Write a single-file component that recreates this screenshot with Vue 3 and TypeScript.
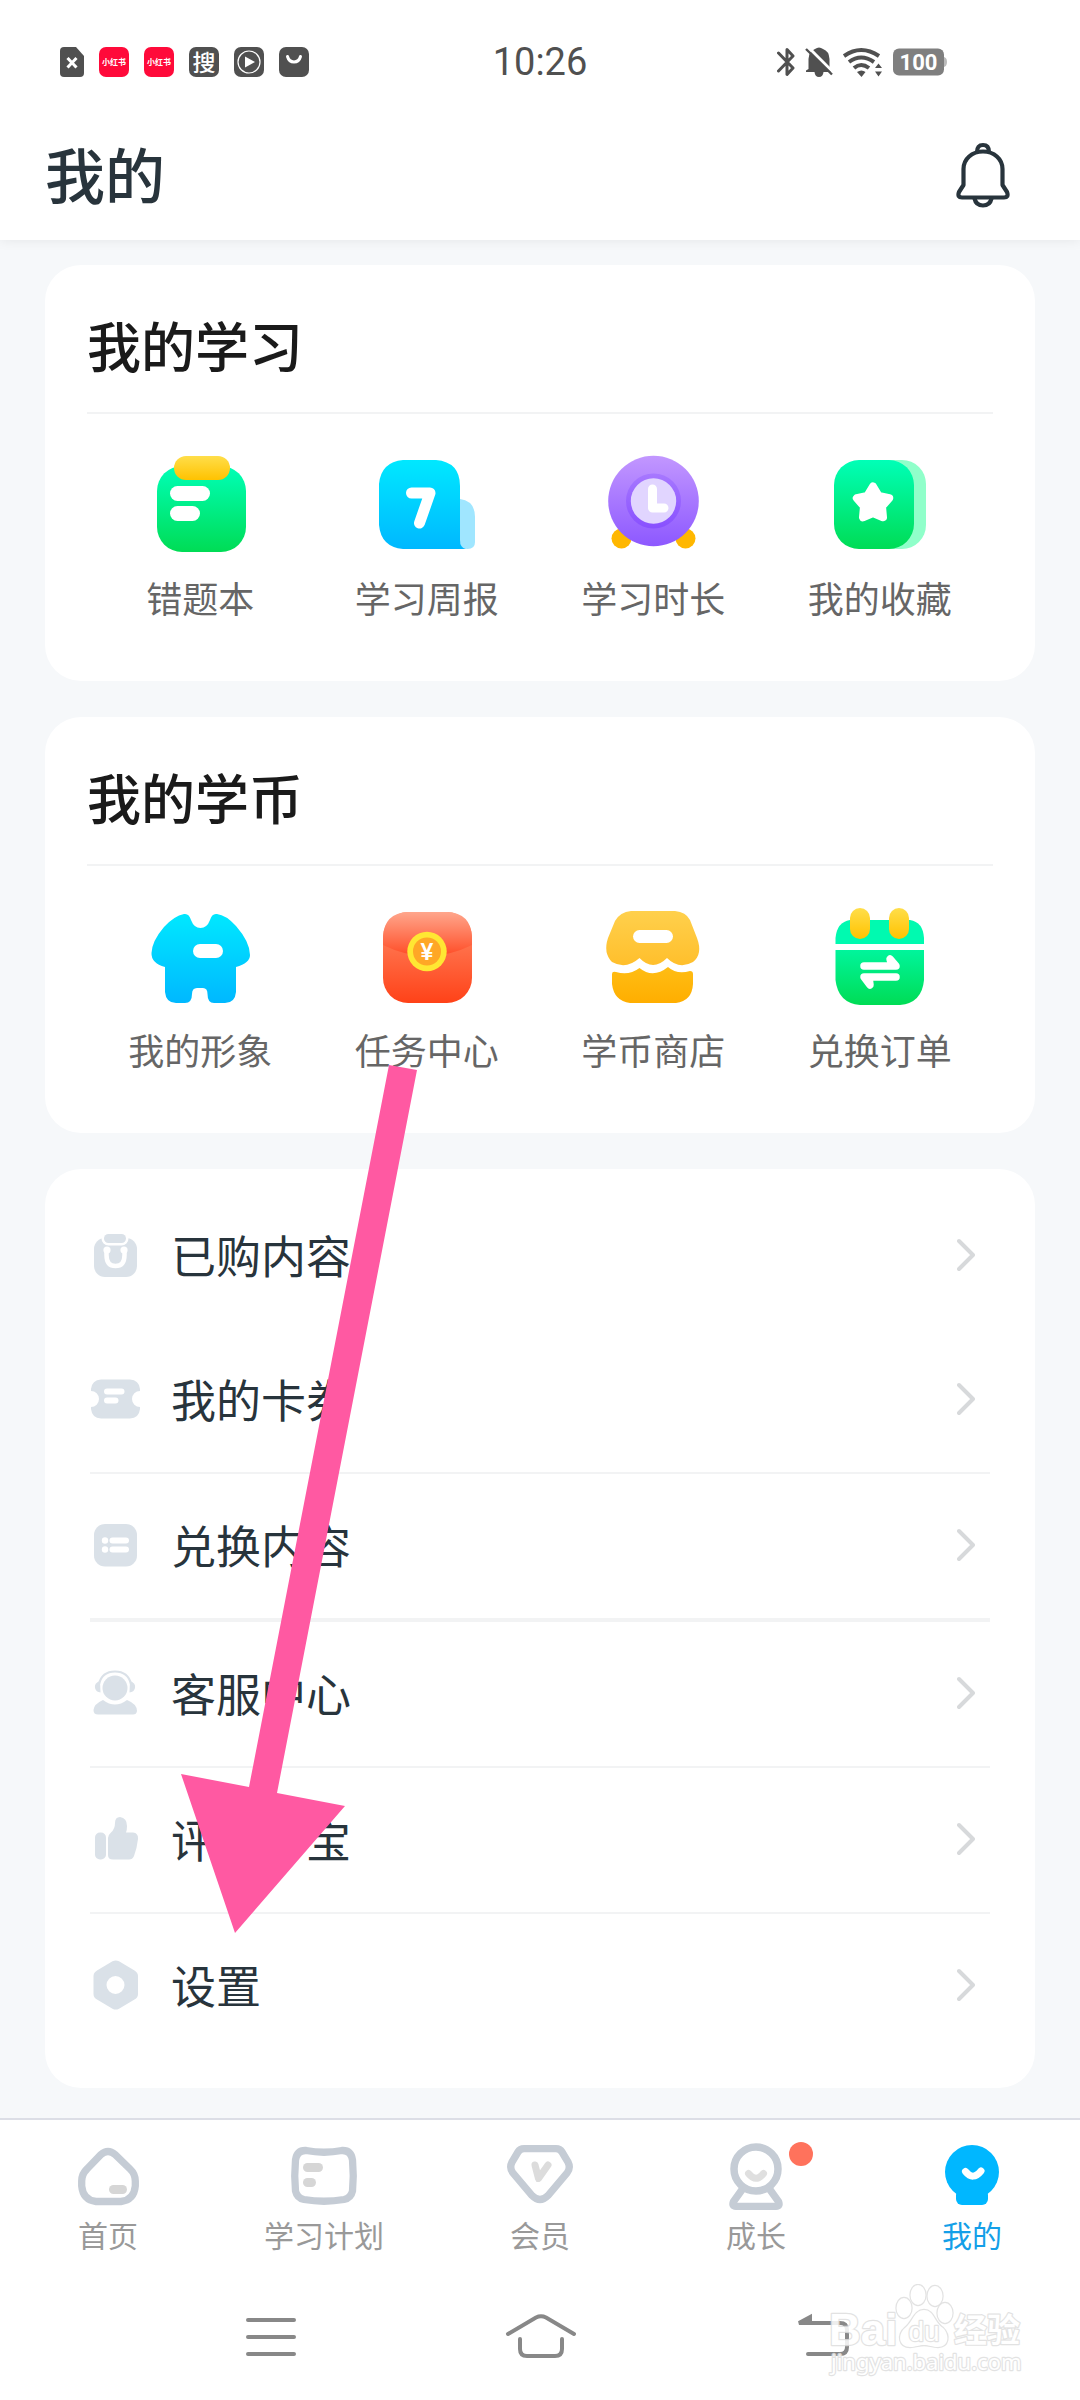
<script setup lang="ts">
interface Entry {
  label: string
  art: string
}
interface Section {
  title: string
  entries: Entry[]
}
interface Row extends Entry {
  divider: 'none' | 'thin' | 'thick'
}
interface Tab extends Entry {
  active?: boolean
  dot?: boolean
}

const sections: Section[] = [
  {
    title: '我的学习',
    entries: [
      {
        label: '错题本',
        art: `<rect x="11" y="16" width="89" height="86" rx="25" fill="url(#g-green)"/>
          <rect x="28" y="6" width="56" height="24" rx="12" fill="url(#g-yellow)"/>
          <rect x="24" y="36" width="40" height="15" rx="7.5" fill="#fff"/>
          <rect x="24" y="56" width="30" height="15" rx="7.5" fill="#fff"/>`,
      },
      {
        label: '学习周报',
        art: `<path d="M87 49Q102 51 102 67V92Q102 99 94.500 99Q87 99 87 92Z" fill="#a0e6ff"/>
          <path d="M30 10H63Q87 12 87 36V90Q87 98 93 99H30Q8 97 6 75V34Q8 12 30 10Z" fill="url(#g-cyan)"/>
          <path d="M38.500 43H57L46.500 73" fill="none" stroke="#fff" stroke-width="11" stroke-linecap="round" stroke-linejoin="round"/>`,
      },
      {
        label: '学习时长',
        art: `<circle cx="22.500" cy="88.500" r="10" fill="#ffb700"/><circle cx="86.500" cy="88.500" r="10" fill="#ffb700"/>
          <circle cx="54.500" cy="51" r="45.300" fill="url(#g-purple)"/>
          <circle cx="54.500" cy="51" r="27.500" fill="url(#g-ring)"/>
          <circle cx="54.500" cy="51" r="22.700" fill="#e1d5ff"/>
          <path d="M53.500 39V58H65" fill="none" stroke="#fff" stroke-width="9" stroke-linecap="round" stroke-linejoin="round"/>`,
      },
      {
        label: '我的收藏',
        art: `<rect x="22" y="10" width="78" height="89" rx="24" fill="#90ffca"/>
          <rect x="8" y="10" width="80" height="89" rx="25" fill="url(#g-green)"/>
          <path d="M47 36.500L52.600 45.800L63.200 48.200L56 56.400L57 67.300L47 63L37 67.300L38 56.400L30.800 48.200L41.400 45.800Z" fill="#fff" stroke="#fff" stroke-width="8" stroke-linejoin="round"/>`,
      },
    ],
  },
  {
    title: '我的学币',
    entries: [
      {
        label: '我的形象',
        art: `<path d="M38 12Q43 11 45 18Q48 26 54.500 26Q61 26 64 18Q66 11 71 12Q80 13 90 24Q104 40 104 53Q104 61 90 65V90Q89 101 79 101H68Q61.500 101 61.500 92Q61.500 86 57 86H51Q46 86 46 92Q46 101 39 101H30Q20 101 19 90V65Q5 61 5.500 51Q6 39 18 25Q28 14 38 12Z" fill="url(#g-cyan)"/>
          <rect x="47" y="42" width="30" height="14" rx="7" fill="#fff"/>`,
      },
      {
        label: '任务中心',
        art: `<rect x="10" y="10" width="89" height="91" rx="25" fill="url(#g-red)"/>
          <path d="M10 43V35Q11 11 35 10H74Q98 11 99 35V43Q54.500 65 10 43Z" fill="url(#g-flap)"/>
          <circle cx="54" cy="49.500" r="19.700" fill="#ffe733"/><circle cx="54" cy="49.500" r="14" fill="#ffa726"/>
          <text x="54" y="57.500" text-anchor="middle" font-family="Liberation Sans, sans-serif" font-weight="700" font-size="23" fill="#fff">¥</text>`,
      },
      {
        label: '学币商店',
        art: `<path d="M32 9H76Q87 10 91 18L98 36Q104 52 94 60Q80 68 68 56Q54 70 40.500 56Q27 68 13 60Q4 51 9 36L16 19Q21 10 32 9Z" fill="url(#g-awning)"/>
          <rect x="34" y="28" width="40" height="13" rx="6.500" fill="#fff"/>
          <path d="M13 72Q13 69 17 70Q30 74 40.500 66Q54 77 69 65Q78 73 91 69Q94 69 94 72V82Q93 99 77 101H31Q15 99 13 82Z" fill="url(#g-base)"/>`,
      },
      {
        label: '兑换订单',
        art: `<path d="M9.500 42V36Q11 20 24 18H84Q97 20 98 36V42Z" fill="#00fab0"/>
          <path d="M9.500 48H98V78Q96 101 74 103H34Q12 101 9.500 78Z" fill="url(#g-green-low)"/>
          <rect x="24" y="6" width="20" height="31" rx="10" fill="url(#g-yellow)"/>
          <rect x="63" y="6" width="20" height="31" rx="10" fill="url(#g-yellow)"/>
          <path d="M38 64H70L64 57L66 64M70 75H38L44 83L43 75" fill="#fff" stroke="#fff" stroke-width="7.500" stroke-linecap="round" stroke-linejoin="round"/>`,
      },
    ],
  },
]

const rows: Row[] = [
  {
    label: '已购内容',
    divider: 'none',
    art: `<rect x="4" y="9" width="43" height="39" rx="11"/>
      <rect x="14" y="5" width="22" height="9" rx="4.500" stroke="#fff" stroke-width="5"/>
      <rect x="14" y="5" width="22" height="9" rx="4.500"/>
      <path d="M16.500 21V26Q16.500 37 25.500 37Q34.500 37 34.500 26V21" fill="none" stroke="#fff" stroke-width="4.500" stroke-linecap="round"/>
      <circle cx="17" cy="21" r="3.600" fill="#fff"/><circle cx="34" cy="21" r="3.600" fill="#fff"/>`,
  },
  {
    label: '我的卡券',
    divider: 'none',
    art: `<path d="M11 6.500H40Q49 7 50 16V18A8 8 0 0 0 50 34V36Q49 45 40 45.500H11Q2 45 1 36V34A8 8 0 0 0 1 18V16Q2 7 11 6.500Z"/>
      <path d="M17 18.500H31.500M17 27.500H25.500" stroke="#fff" stroke-width="6" stroke-linecap="round"/>`,
  },
  {
    label: '兑换内容',
    divider: 'thin',
    art: `<rect x="4" y="5" width="43" height="42.500" rx="11"/>
      <circle cx="15" cy="21.500" r="3.200" fill="#fff"/><circle cx="15" cy="30.500" r="3.200" fill="#fff"/>
      <path d="M22.500 21.500H36M22.500 30.500H36" stroke="#fff" stroke-width="6" stroke-linecap="round"/>`,
  },
  {
    label: '客服中心',
    divider: 'thick',
    art: `<path d="M13 33Q25 42 37 33Q47 37 47 44Q46.500 47.500 43 47.500H8Q3.500 47.500 3.500 43Q4 37 13 33Z"/>
      <circle cx="25" cy="21" r="12.500"/>
      <path d="M9 17Q12 4.500 25 4.500Q38 4.500 41 17" fill="none" stroke="#dae1e8" stroke-width="2.200"/>
      <path d="M10 14Q4 16 5 21Q6 25 10.500 25.500ZM40 14Q46 16 45 21Q44 25 39.500 25.500Z"/>`,
  },
  {
    label: '评价学宝',
    divider: 'thin',
    art: `<rect x="5" y="19.500" width="11" height="27" rx="5"/>
      <path d="M18 25Q18 22 21 19.500Q25 16 25 10Q25 4 30 4Q37 5 37 13Q37 17 36 19.500H43Q48.500 20 48 26Q47 35 44 43Q42.500 46.500 39 46.500H23Q18 46.500 18 42Z"/>`,
  },
  {
    label: '设置',
    divider: 'thin',
    art: `<path fill-rule="evenodd" d="M22.500 2.300Q25.700 .500 29 2.300L44.500 11.500Q48 13.700 48 17V35Q48 38.500 44.500 40.500L29 49.700Q25.700 51.500 22.500 49.700L7 40.500Q3.500 38.500 3.500 35V17Q3.500 13.700 7 11.500ZM25.500 17A9 9 0 1 0 25.500 35A9 9 0 1 0 25.500 17Z"/>`,
  },
]

const tabs: Tab[] = [
  {
    label: '首页',
    art: `<path d="M29 14.500Q36 8.500 43 14.500L58 29Q63.300 34 63.300 41V46Q62 60 49 61.500H24Q11 60 9.700 46V41Q9.700 34 15 29Z" fill="none" stroke="#c5ccd5" stroke-width="7.300"/>
      <rect x="37" y="45" width="18" height="9" rx="4.500" fill="#d6d6d6"/>`,
  },
  {
    label: '学习计划',
    art: `<path d="M18 10.500Q36 14 54 10.500Q63 10 64.500 20Q66 36 64.500 51Q63 58 56 59.500Q36 63 16 59.500Q9 58 7.500 51Q6 36 7.500 20Q9 10 18 10.500Z" fill="none" stroke="#c5ccd5" stroke-width="7.300"/>
      <rect x="15" y="23" width="20" height="9" rx="4.500" fill="#d6d6d6"/><rect x="15" y="38" width="13" height="9" rx="4.500" fill="#d6d6d6"/>`,
  },
  {
    label: '会员',
    art: `<path d="M20 8.700H52Q56 8.700 58 12L64 22Q67 28 63 33L44 55.500Q36 63.500 28 55.500L9 33Q5 28 8 22L14 12Q16 8.700 20 8.700Z" fill="none" stroke="#c5ccd5" stroke-width="7.300"/>
      <path d="M31 25L34.500 38.500L44 25" fill="none" stroke="#dcdcdc" stroke-width="7" stroke-linecap="round" stroke-linejoin="round"/>`,
  },
  {
    label: '成长',
    dot: true,
    art: `<path d="M22.500 49L13.500 61.500Q11.500 66.300 16 66.300H56Q60.500 66.300 58.500 61.500L49.500 49" fill="none" stroke="#c5ccd5" stroke-width="7.300"/>
      <circle cx="36" cy="29" r="22" fill="#fff" stroke="#c5ccd5" stroke-width="7.500"/>
      <path d="M28.500 33.500Q36 43 43.500 33.500" fill="none" stroke="#dfdfdf" stroke-width="7" stroke-linecap="round"/>`,
  },
  {
    label: '我的',
    active: true,
    art: `<circle cx="36" cy="32" r="27" fill="#00b7ff"/><rect x="20" y="49" width="32" height="16" rx="6" fill="#00b7ff"/>
      <path d="M29.500 31.500Q37 41 45 31" fill="none" stroke="#fff" stroke-width="7" stroke-linecap="round"/>`,
  },
]

const systemKeys: Entry[] = [
  { label: '最近任务', art: `<path d="M18 23H64M18 40H64M18 57H64"/>` },
  { label: '主屏幕', art: `<path d="M8 37L36 20.500Q41 18 46 20.500L74 37M20 42V52Q20 59 27 59H55Q62 59 62 52V42"/>` },
  { label: '返回', art: `<path d="M32 26H70Q77 26 77 33V50Q77 57 70 57H38"/><path d="M29 26L40 20V26Z" fill="#888"/>` },
]
</script>

<template>
  <div class="page">
    <svg class="defs" width="0" height="0" aria-hidden="true">
      <defs>
        <linearGradient id="g-green" x2="0" y2="1"><stop stop-color="#00ffb7" /><stop offset="1" stop-color="#00dc55" /></linearGradient>
        <linearGradient id="g-green-low" x2="0" y2="1"><stop stop-color="#00f59c" /><stop offset="1" stop-color="#00dc55" /></linearGradient>
        <linearGradient id="g-yellow" x2="0" y2="1"><stop stop-color="#ffde4a" /><stop offset="1" stop-color="#ffc200" /></linearGradient>
        <linearGradient id="g-cyan" x2="0" y2="1"><stop stop-color="#00e8ff" /><stop offset="1" stop-color="#00b8ff" /></linearGradient>
        <linearGradient id="g-purple" x2="0" y2="1"><stop stop-color="#c297ff" /><stop offset="1" stop-color="#8d58ff" /></linearGradient>
        <linearGradient id="g-ring" x2="0" y2="1"><stop stop-color="#a778ff" /><stop offset="1" stop-color="#8850ff" /></linearGradient>
        <linearGradient id="g-red" x2="0" y2="1"><stop stop-color="#ff8c68" /><stop offset="1" stop-color="#ff4218" /></linearGradient>
        <linearGradient id="g-flap" x2="0" y2="1"><stop stop-color="#ffa68c" /><stop offset="1" stop-color="#ff4c26" /></linearGradient>
        <linearGradient id="g-awning" x2="0" y2="1"><stop stop-color="#ffd04c" /><stop offset="1" stop-color="#ffbf2c" /></linearGradient>
        <linearGradient id="g-base" x2="0" y2="1"><stop stop-color="#ffbd14" /><stop offset="1" stop-color="#ffae00" /></linearGradient>
      </defs>
    </svg>

    <div class="status">
      <div class="notices">
        <svg width="24" height="30" viewBox="0 0 24 30"><path d="M4 0H16L24 9V26Q24 30 20 30H4Q0 30 0 26V4Q0 0 4 0Z" fill="#505050" /><path d="M7.500 11L16.500 20.500M16.500 11L7.500 20.500" stroke="#fff" stroke-width="3" /></svg>
        <svg v-for="n in 2" :key="n" width="30" height="30" viewBox="0 0 30 30"><rect width="30" height="30" rx="7" fill="#ff0a3a" /><text x="15" y="18" text-anchor="middle" class="cjk" font-size="8" font-weight="700" fill="#fff">小红书</text></svg>
        <span class="search-badge">搜</span>
        <svg width="30" height="30" viewBox="0 0 30 30"><rect width="30" height="30" rx="7" fill="#505050" /><circle cx="15" cy="15" r="11" fill="none" stroke="#fff" stroke-width="1.200" /><path d="M11 9.500L21 15L11 20.500Z" fill="#fff" /></svg>
        <svg width="30" height="30" viewBox="0 0 30 30"><rect width="30" height="30" rx="7" fill="#505050" /><path d="M8.500 9.500Q10 15 15 15Q20 15 21.500 9.500" fill="none" stroke="#fff" stroke-width="3" stroke-linecap="round" /></svg>
      </div>
      <time class="clock">10:26</time>
      <div class="signals">
        <svg width="18" height="30" viewBox="0 0 18 30"><path d="M1.500 6L16 21L10 27.500V2.500L16 9L1.500 24" fill="none" stroke="#505050" stroke-width="3" stroke-linejoin="round" stroke-linecap="round" /></svg>
        <svg width="28" height="30" viewBox="0 0 28 30"><path d="M3.500 22V12Q4 4 10 2Q14 -1 18 2Q24 4 24.500 12V22L27 25H18.500Q18 30 14 30Q10 30 9.500 25H1V23.500Z" fill="#505050" /><path d="M3 0L28 25" stroke="#fff" stroke-width="3" /><path d="M1 2L27 27.500" stroke="#505050" stroke-width="2.400" /></svg>
        <svg width="40" height="30" viewBox="0 0 40 30"><g fill="none" stroke="#505050" stroke-width="4"><path d="M1 9Q18 -3 36 9" /><path d="M6 15Q18 6 31 15" /><path d="M11 21Q18 15 26 21" /></g><path d="M14 25Q18.500 22 22.500 25L18.500 30Z" fill="#505050" /><path d="M32 21L35.500 16.500L39 21ZM32 24.500H39L35.500 29.500Z" fill="#505050" /></svg>
        <svg width="54" height="28" viewBox="0 0 54 28"><path d="M50 9Q54 9 54 14Q54 19 50 19Z" fill="#bbb" /><rect width="51" height="27" rx="6" y="0.500" fill="#7f7f7f" /><text x="25.500" y="22" text-anchor="middle" font-family="Roboto, sans-serif" font-size="22" font-weight="700" fill="#fff">100</text></svg>
      </div>
    </div>

    <header class="header">
      <h1>我的</h1>
      <button class="bell" type="button" aria-label="消息通知">
        <svg width="54" height="70" viewBox="0 -4 54 70" fill="none" stroke="#28343c" stroke-width="4.200" stroke-linejoin="round">
          <path d="M7.500 43V27C7.500 17 16 9.500 27 9.500S46.500 17 46.500 27V43L51 50Q53 55.500 48 55.500H6Q1 55.500 3 50Z" />
          <path d="M21 10Q21 3 27 3Q33 3 33 10" /><path d="M18.500 56.500Q20 63.500 27 63.500Q34 63.500 35.500 56.500" />
        </svg>
      </button>
    </header>

    <main class="content">
      <section v-for="s in sections" :key="s.title" class="card">
        <h2>{{ s.title }}</h2>
        <div class="grid">
          <a v-for="e in s.entries" :key="e.label" href="#" class="entry">
            <svg width="108" height="108" viewBox="0 0 108 108" aria-hidden="true" v-html="e.art"></svg>
            <span>{{ e.label }}</span>
          </a>
        </div>
      </section>

      <nav class="card list">
        <a v-for="r in rows" :key="r.label" href="#" class="row" :class="r.divider">
          <svg width="52" height="52" viewBox="0 0 52 52" fill="#dae1e8" aria-hidden="true" v-html="r.art"></svg>
          <span>{{ r.label }}</span>
          <svg class="chevron" width="18" height="34" viewBox="0 0 18 34" aria-hidden="true"><path d="M2 3L16 17L2 31" fill="none" stroke="#d7d9db" stroke-width="4" stroke-linecap="round" stroke-linejoin="round" /></svg>
        </a>
      </nav>
    </main>

    <footer class="footer">
      <nav class="tabs">
        <a v-for="t in tabs" :key="t.label" href="#" class="tab" :class="{ active: t.active }">
          <span class="tab-icon">
            <svg width="72" height="72" viewBox="0 0 72 72" aria-hidden="true" v-html="t.art"></svg>
            <i v-if="t.dot" class="dot"></i>
          </span>
          <span>{{ t.label }}</span>
        </a>
      </nav>
      <div class="keys">
        <button v-for="k in systemKeys" :key="k.label" type="button" :aria-label="k.label">
          <svg width="82" height="80" viewBox="-1 0 82 80" fill="none" stroke="#888" stroke-width="4" stroke-linecap="round" v-html="k.art"></svg>
        </button>
      </div>

      <svg class="watermark" width="200" height="100" viewBox="0 0 200 100" fill="#fff" stroke="#dedede" stroke-width="2.400" stroke-linejoin="round" paint-order="stroke" opacity="0.85">
        <text x="3" y="61" font-family="Liberation Sans, sans-serif" font-size="44" font-weight="700">Bai</text>
        <path d="M98 26C88 26 87 38 79 44C71 51 73 63 84 63C90 63 93 61 98 61S106 63 112 63C123 63 124 51 117 44C108 38 108 26 98 26Z" />
        <ellipse cx="78" cy="24" rx="7.500" ry="10" /><ellipse cx="92" cy="11" rx="7.500" ry="10" />
        <ellipse cx="109" cy="12" rx="7.500" ry="10" /><ellipse cx="119" cy="29" rx="7.500" ry="10" />
        <text x="98" y="57" text-anchor="middle" font-family="Liberation Sans, sans-serif" font-size="28">du</text>
        <text x="128" y="58" class="cjk" font-size="33" font-weight="700">经验</text>
        <text x="5" y="86" font-family="Noto Sans, sans-serif" font-size="22">jingyan.baidu.com</text>
      </svg>
    </footer>

    <svg class="arrow" width="240" height="870" viewBox="0 0 240 870" aria-hidden="true">
      <path d="M209 1L237 6L97 729L165 742L55 869L1 710L69 723Z" fill="#ff59a2" />
    </svg>
  </div>
</template>

<style>
body {
  background: #f6f8fa;
}
</style>

<style scoped>
.page {
  position: relative;
  min-height: 100vh;
  display: flex;
  flex-direction: column;
  background: #f6f8fa;
  color: #28343c;
  font-family: "Noto Sans CJK SC", sans-serif;
  overflow: hidden;
}
.page * {
  box-sizing: border-box;
}
svg {
  display: block;
  flex: none;
}
.defs {
  position: absolute;
}
.cjk {
  font-family: "Noto Sans CJK SC", sans-serif;
}
a {
  color: inherit;
  text-decoration: none;
}
button {
  padding: 0;
  border: 0;
  background: none;
}
.status {
  display: grid;
  grid-template-columns: 1fr auto 1fr;
  align-items: center;
  height: 105px;
  padding: 19px 0 0;
  background: #fff;
}
.notices {
  display: flex;
  gap: 15px;
  padding-left: 60px;
}
.search-badge {
  width: 30px;
  height: 30px;
  border-radius: 7px;
  background: #505050;
  color: #fff;
  font-size: 23px;
  font-weight: 500;
  line-height: 28px;
  text-align: center;
}
.clock {
  font-family: Roboto, sans-serif;
  font-size: 38px;
  font-weight: 400;
  line-height: 48px;
  color: #505050;
}
.signals {
  display: flex;
  align-items: center;
  justify-content: flex-end;
  gap: 10px;
  padding-right: 133px;
}
.header {
  position: relative;
  display: flex;
  align-items: center;
  justify-content: space-between;
  height: 135px;
  padding: 0 70px 0 45px;
  background: #fff;
  box-shadow: 0 0 12px rgba(0, 0, 0, 0.08);
  clip-path: inset(0 0 -16px 0);
}
h1,
h2 {
  margin: 0;
  font-weight: 500;
}
h1 {
  font-size: 60px;
  line-height: 90px;
}
.content {
  flex: 1;
  display: flex;
  flex-direction: column;
  gap: 36px;
  padding: 25px 45px 30px;
}
.card {
  padding: 12px 42px 57px;
  border-radius: 36px;
  background: #fff;
}
h2 {
  border-bottom: 2px solid #f2f3f4;
  font-size: 54px;
  line-height: 135px;
  color: #1a1a1a;
}
.grid {
  display: grid;
  grid-template-columns: repeat(4, 1fr);
  padding-top: 36px;
}
.entry {
  display: flex;
  flex-direction: column;
  align-items: center;
  gap: 12px;
  font-size: 36px;
  line-height: 54px;
  color: #666;
}
.list {
  padding: 15px 45px 30px;
}
.row {
  display: flex;
  align-items: center;
  gap: 29px;
  padding: 0 15px 3px 0;
  font-size: 45px;
  line-height: 141px;
}
.row.thin {
  border-top: 2px solid #f2f3f4;
}
.row.thick {
  border-top: 4px solid #f2f3f4;
}
.chevron {
  margin-left: auto;
}
.footer {
  position: relative;
  border-top: 2px solid #dcdee6;
  background: #fff;
}
.tabs {
  display: grid;
  grid-template-columns: repeat(5, 1fr);
  padding-top: 20px;
}
.tab {
  display: flex;
  flex-direction: column;
  align-items: center;
  font-size: 30px;
  line-height: 44px;
  color: #999;
}
.tab.active {
  color: #149fe8;
}
.tab-icon {
  position: relative;
}
.dot {
  position: absolute;
  top: 2px;
  left: 69px;
  width: 24px;
  height: 24px;
  border-radius: 50%;
  background: #ff725c;
}
.keys {
  display: flex;
  justify-content: space-around;
  height: 144px;
  padding: 18px 135px 0;
  align-items: center;
}
.watermark {
  position: absolute;
  right: 54px;
  bottom: 16px;
}
.arrow {
  position: absolute;
  top: 1064px;
  left: 180px;
  pointer-events: none;
}
</style>
